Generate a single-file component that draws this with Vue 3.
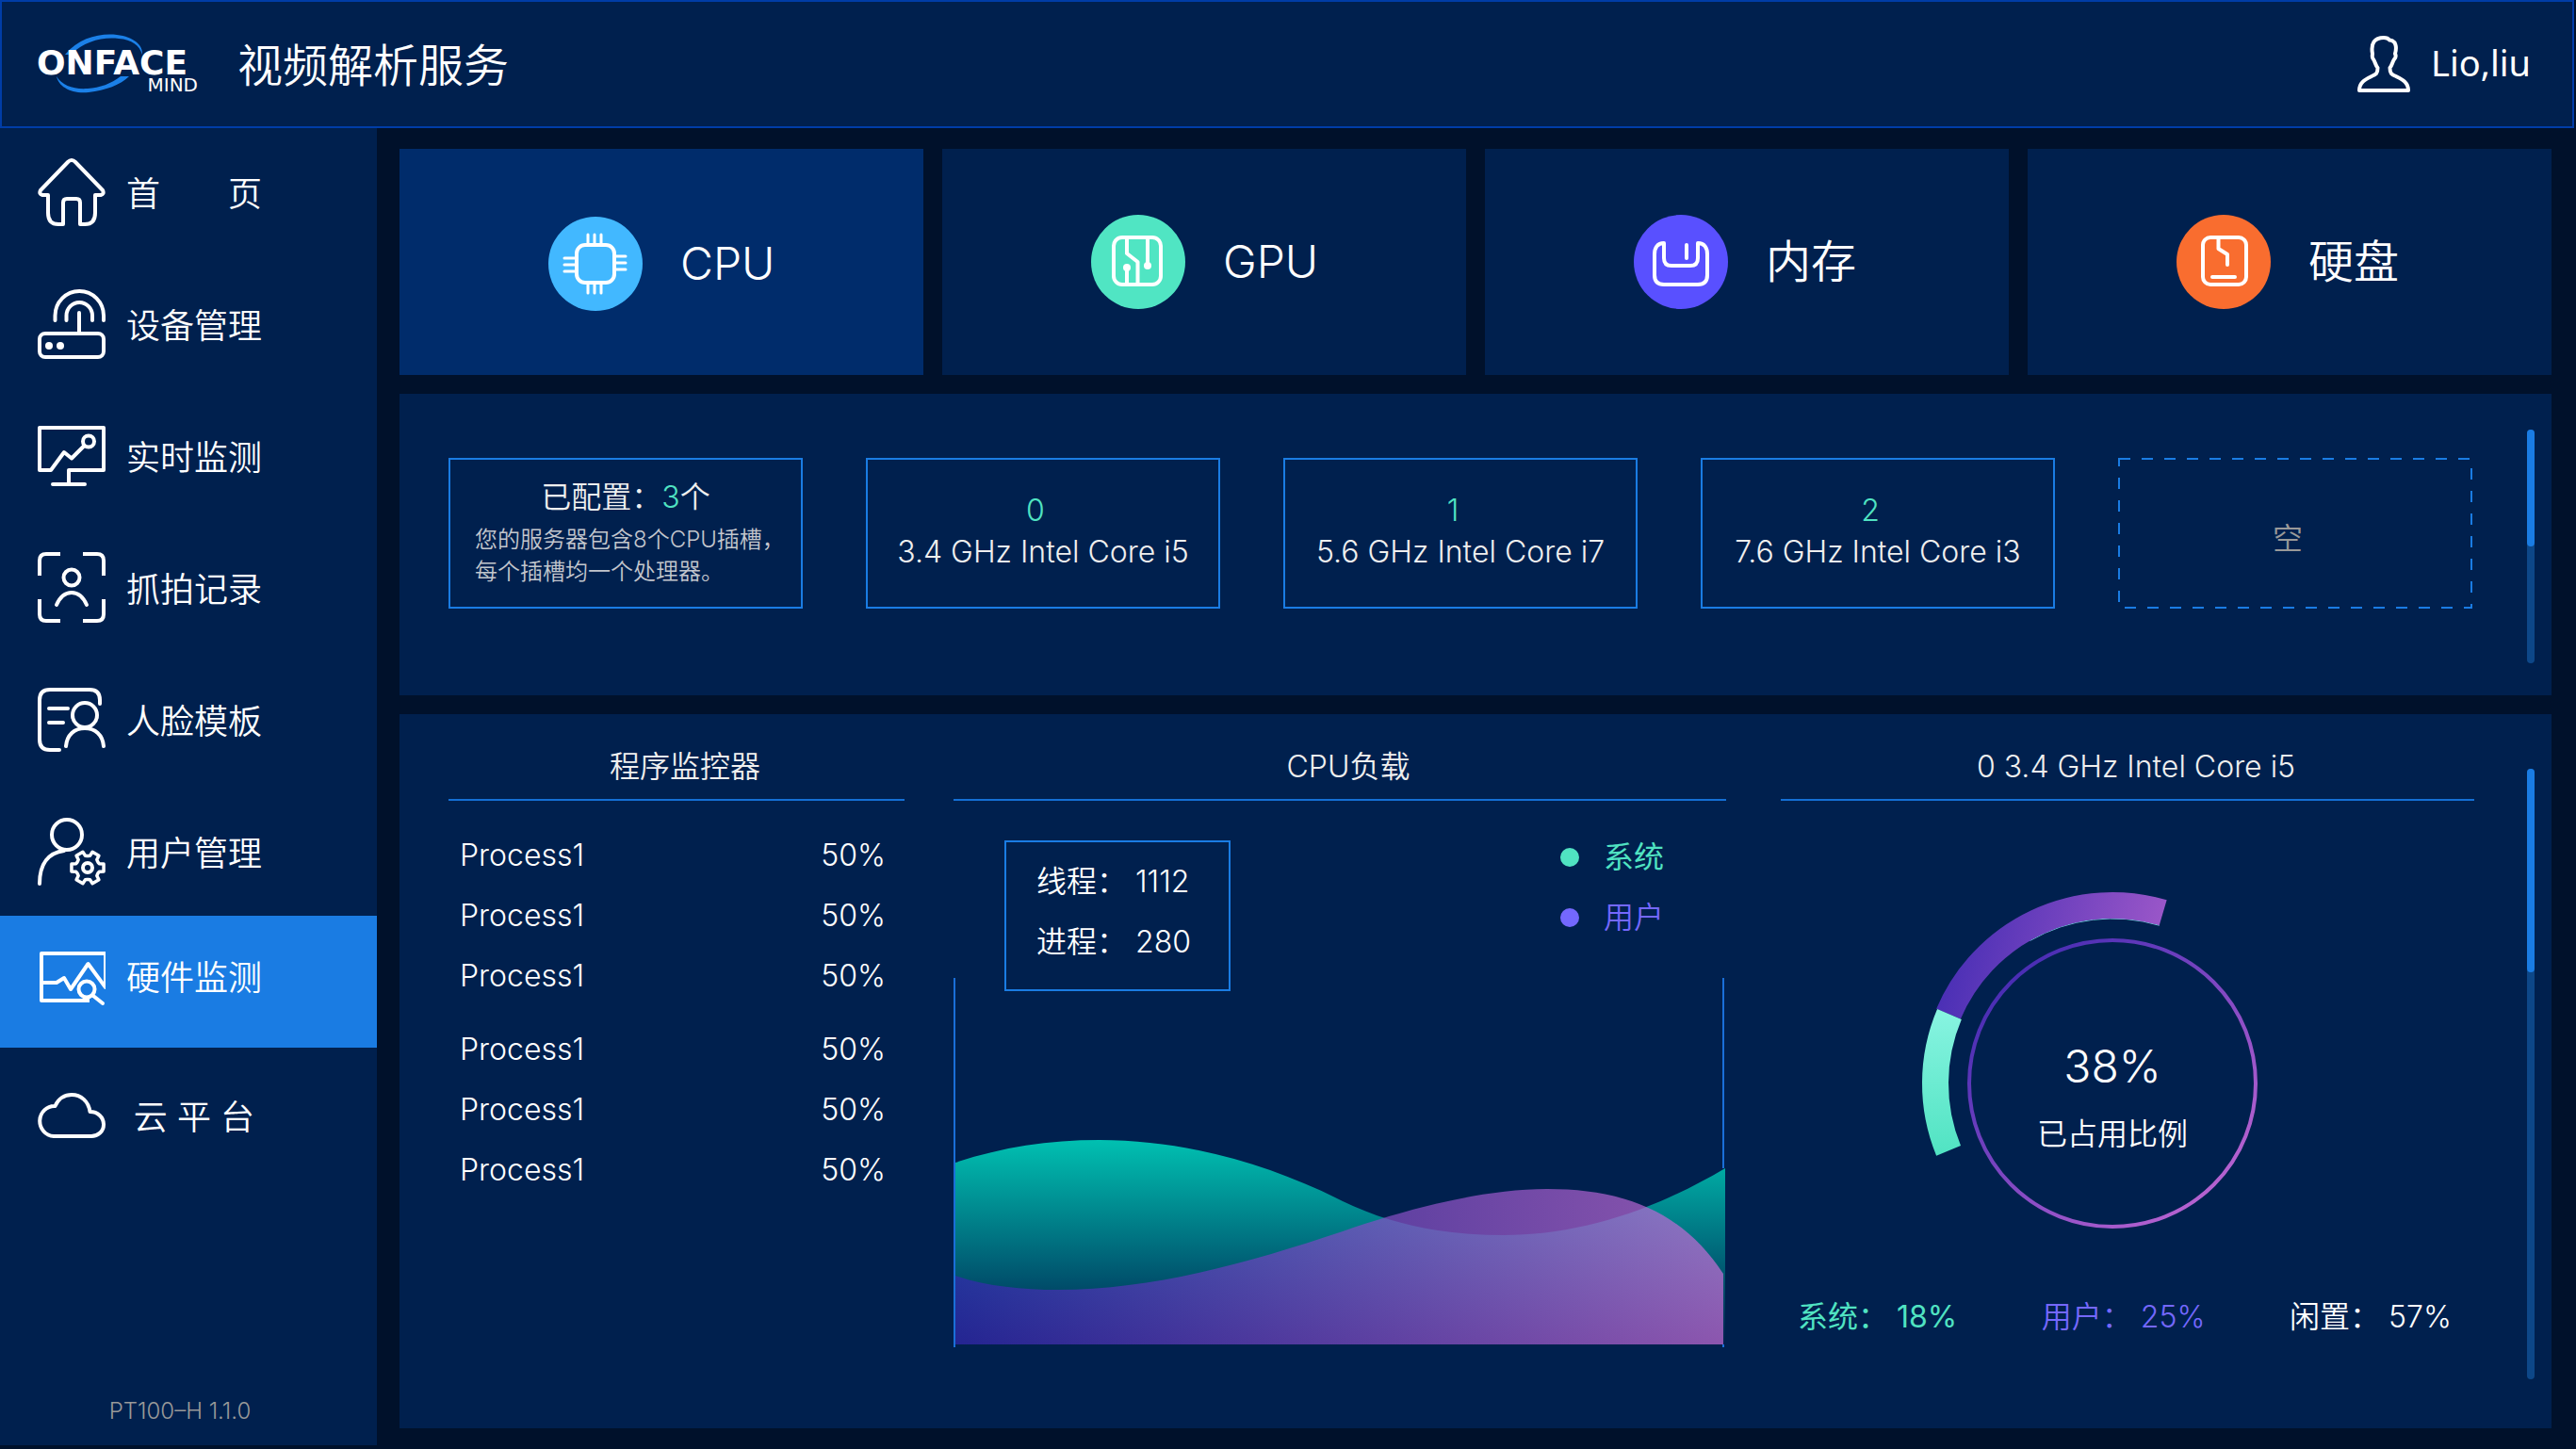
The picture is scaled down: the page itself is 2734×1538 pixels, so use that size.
<script setup>
import { ref } from 'vue'

const navItems = [
  { icon: 'home', label: '首 页', spread: true },
  { icon: 'device', label: '设备管理' },
  { icon: 'monitor', label: '实时监测' },
  { icon: 'capture', label: '抓拍记录' },
  { icon: 'template', label: '人脸模板' },
  { icon: 'user', label: '用户管理' },
  { icon: 'hardware', label: '硬件监测', active: true },
  { icon: 'cloud', label: '云 平 台', centered: true },
]

const tabs = [
  { id: 'cpu', label: 'CPU', color: '#42b8ff' },
  { id: 'gpu', label: 'GPU', color: '#50e5c3' },
  { id: 'memory', label: '内存', color: '#5950ff' },
  { id: 'disk', label: '硬盘', color: '#f96d2f' },
]
const activeTab = ref('cpu')

const slots = [
  { index: 0, name: '3.4 GHz Intel Core i5' },
  { index: 1, name: '5.6 GHz Intel Core i7' },
  { index: 2, name: '7.6 GHz Intel Core i3' },
]

const processGroups = [
  [
    { name: 'Process1', usage: '50%' },
    { name: 'Process1', usage: '50%' },
    { name: 'Process1', usage: '50%' },
  ],
  [
    { name: 'Process1', usage: '50%' },
    { name: 'Process1', usage: '50%' },
    { name: 'Process1', usage: '50%' },
  ],
]

// Point on a circle; the angle is measured clockwise from the top.
function polar(cx, cy, r, deg) {
  const a = ((deg - 90) * Math.PI) / 180
  return `${(cx + r * Math.cos(a)).toFixed(2)} ${(cy + r * Math.sin(a)).toFixed(2)}`
}
function arc(r, from, to) {
  return `M${polar(204, 204, r, from)} A${r} ${r} 0 0 1 ${polar(204, 204, r, to)}`
}
const arcs = {
  user: arc(189, -67, 16.5),
  system: arc(188, -112.3, -67),
  edge: arc(175, -30, 16.5),
}

const gear = (() => {
  const points = []
  for (let k = 0; k < 6; k++) {
    const mid = k * 60 + 30
    points.push(
      polar(53, 53, 12.5, mid - 27),
      polar(53, 53, 13, mid - 19),
      polar(53, 53, 17.5, mid - 13),
      polar(53, 53, 17.5, mid + 13),
      polar(53, 53, 13, mid + 19),
      polar(53, 53, 12.5, mid + 27),
    )
  }
  return `M${points.join('L')}Z`
})()
</script>

<template>
  <div class="app">
    <header class="topbar">
      <svg class="logo" viewBox="0 0 170 64" role="img" aria-label="ONFACE MIND">
        <path d="M29 22 C44 4 66 -1 84 1 C102 3 112 12 111 22 C108 12 100 6 86 5 C68 3 50 8 35 22 Z" fill="#1b80e8" />
        <path d="M20 45 C22 56 36 64 54 62 C72 60 88 54 97 45 L88 45 C78 53 66 57 53 58 C38 59 26 55 20 45 Z" fill="#1b80e8" />
        <text x="-1" y="43" class="logo-main">ONFACE</text>
        <text x="170" y="61" class="logo-sub" text-anchor="end">MIND</text>
      </svg>
      <h1>视频解析服务</h1>
      <a href="#" class="account">
        <svg class="line-icon" width="56" height="60" viewBox="0 0 56 60" aria-hidden="true">
          <path d="M2 58 C2 49 9 46 15 43 C20 41 21.500 40 21.500 34 C19 31 19 28 17 25 C15 23 16 21 16 19 C14 8 18 2 28 2 C31 2 33 3 34 4.500 C41 5 42 12 40 19 C41 21 41 23 39 25 C37 28 37 31 34.500 34 C34.500 40 36 41 41 43 C47 46 54 49 54 58 Z" />
        </svg>
        <span>Lio,liu</span>
      </a>
    </header>

    <div class="body">
      <aside class="sidebar">
        <nav>
          <a v-for="item in navItems" :key="item.icon" href="#" class="nav-item" :class="{ active: item.active }">
            <svg class="line-icon" width="72" height="76" viewBox="0 0 72 76" aria-hidden="true">
              <g v-if="item.icon === 'home'" transform="translate(0 2)">
                <path d="M27 70 H22 Q11 70 11 58 V39 H5 Q1 38 3 34 L32 4 Q36 0 40 4 L69 34 Q71 38 67 39 H61 V58 Q61 70 50 70 H45 V47 Q45 43 41 43 H31 Q27 43 27 47 Z" />
              </g>
              <g v-else-if="item.icon === 'device'" transform="translate(0 1)">
                <path d="M18.500 33 V28 A25.700 26 0 0 1 70 28 V33 M30.500 33 V28 A13.700 14 0 0 1 58 28 V33 M44 25 V46" />
                <rect x="2" y="47" width="68" height="25" rx="6" />
                <circle class="solid" cx="12" cy="60" r="4" />
                <circle class="solid" cx="24" cy="60" r="4" />
              </g>
              <g v-else-if="item.icon === 'monitor'" transform="translate(0 6)">
                <path d="M33 62 V47 H70 V2 H2 V47 H14 L28 28 L36 34.500 L49.500 21 M16 62 H50" />
                <circle cx="54" cy="16.500" r="6" />
              </g>
              <g v-else-if="item.icon === 'capture'">
                <path class="butt" d="M2 25 V9 Q2 2 9 2 H24 M48 2 H63 Q70 2 70 9 V25 M70 50 V66 Q70 73 63 73 H48 M24 73 H9 Q2 73 2 66 V50" />
                <circle cx="36" cy="27" r="8.500" />
                <path d="M20 56 C24 47 29 43 36 43 C43 43 48 47 52 56" />
              </g>
              <g v-else-if="item.icon === 'template'" transform="translate(0 4)">
                <path d="M23 66 H13 Q2 66 2 55 V13 Q2 2 13 2 H55 Q66 2 66 13 V17 M12 22 H32 M12 37 H27" />
                <circle cx="50" cy="29" r="13" />
                <path d="M30 62 C31 50 39 43 50 43 C61 43 69 50 70 62" />
              </g>
              <g v-else-if="item.icon === 'user'" transform="translate(0 2)">
                <circle cx="31" cy="18" r="16" />
                <path d="M28 35 C12 37 2 48 2 70" />
                <path :d="gear" stroke-width="3.500" />
                <circle cx="53" cy="53" r="5" />
              </g>
              <g v-else-if="item.icon === 'hardware'" transform="translate(2 10)">
                <path class="square" d="M51 52 H2 V2 H70 V38 L51.500 13 L33 40 L26 28 L18 33 H2" />
                <circle cx="50" cy="40" r="8.500" />
                <path d="M57 47 L67 55" />
              </g>
              <g v-else transform="translate(0 14)">
                <path d="M17 46 A15.500 16 0 0 1 18.500 14 C22 6 29 2 36 2 C46 2 54 9 55.500 20 C64 20 70 26 70 33.500 C70 41 64 46 57 46 Z" />
              </g>
            </svg>
            <span class="nav-label" :class="{ spread: item.spread, centered: item.centered }">{{ item.label }}</span>
          </a>
        </nav>
        <p class="version">PT100–H 1.1.0</p>
      </aside>

      <main>
        <div class="tabs" role="tablist">
          <button
            v-for="tab in tabs"
            :key="tab.id"
            type="button"
            role="tab"
            class="tab"
            :class="{ active: activeTab === tab.id }"
            :aria-selected="activeTab === tab.id"
            @click="activeTab = tab.id"
          >
            <svg class="line-icon" width="100" height="100" viewBox="0 0 100 100" aria-hidden="true">
              <circle class="disc" cx="50" cy="50" r="50" :fill="tab.color" />
              <g v-if="tab.id === 'cpu'">
                <rect x="30" y="30" width="40" height="40" rx="9" />
                <path stroke-width="3" d="M42 28 V19 M49 28 V19 M56 28 V19 M42 72 V81 M49 72 V81 M56 72 V81 M28 44 H17 M28 51 H17 M28 58 H17 M72 42 H82 M72 49 H82 M72 56 H82" />
              </g>
              <g v-else-if="tab.id === 'gpu'">
                <rect x="24" y="24" width="50" height="50" rx="9" />
                <path d="M38 25 V41 L49.500 50 V73 M38 58 V73 M60 25 V54" />
                <circle class="solid" cx="38" cy="56" r="4" />
                <circle class="solid" cx="60" cy="54" r="4" />
              </g>
              <g v-else-if="tab.id === 'memory'">
                <path d="M32 30 C25 30 22 35 22 42 V64 Q22 74 32 74 H68 Q78 74 78 64 V42 C78 35 75 30 68 30 V46 Q68 54 60 54 H40 Q32 54 32 46 Z M56 32 V46" />
              </g>
              <g v-else>
                <rect x="28" y="24" width="46" height="50" rx="8" />
                <path d="M44.500 25 V36 L54 42 V53 M38 66 H62" />
              </g>
            </svg>
            <span>{{ tab.label }}</span>
          </button>
        </div>

        <section class="panel slots-panel">
          <ul class="slots">
            <li class="slot summary">
              <h2>已配置：<em>3</em>个</h2>
              <p>您的服务器包含8个CPU插槽，<br />每个插槽均一个处理器。</p>
            </li>
            <li v-for="slot in slots" :key="slot.index" class="slot">
              <span class="slot-index">{{ slot.index }}</span>
              <span>{{ slot.name }}</span>
            </li>
            <li class="slot empty">
              <svg class="dashes" aria-hidden="true">
                <rect x="1" y="1" width="374" height="158" />
              </svg>
              <span>空</span>
            </li>
          </ul>
          <div class="scrollbar"><div class="thumb half"></div></div>
        </section>

        <section class="panel detail-panel">
          <div class="columns">
            <section>
              <h2 class="col-title">程序监控器</h2>
              <table class="processes">
                <tbody v-for="(group, g) in processGroups" :key="g">
                  <tr v-for="(row, r) in group" :key="r">
                    <td>{{ row.name }}</td>
                    <td class="usage">{{ row.usage }}</td>
                  </tr>
                </tbody>
              </table>
            </section>

            <section>
              <h2 class="col-title">CPU负载</h2>
              <div class="load-head">
                <div class="counts">
                  <p>线程： 1112</p>
                  <p>进程： 280</p>
                </div>
                <ul class="legend">
                  <li class="system">系统</li>
                  <li class="user">用户</li>
                </ul>
              </div>
              <svg class="chart" viewBox="0 0 820 392" preserveAspectRatio="none" role="img" aria-label="CPU负载">
                <defs>
                  <linearGradient id="waveSystem" gradientUnits="userSpaceOnUse" x1="0" y1="172" x2="0" y2="389">
                    <stop offset="0" stop-color="#00c0b1" />
                    <stop offset="1" stop-color="#00204e" />
                  </linearGradient>
                  <linearGradient id="waveUser" gradientUnits="userSpaceOnUse" x1="0" y1="389" x2="817" y2="350">
                    <stop offset="0" stop-color="#3326ae" />
                    <stop offset="1" stop-color="#c86dd7" />
                  </linearGradient>
                </defs>
                <path d="M2 196 C50 180 100 172 155 172 C250 172 340 200 413 237 C465 262 520 273 584 273 C660 273 740 249 819 202 V389 H2 Z" fill="url(#waveSystem)" />
                <path d="M2 316 C35 327 72 331 111 331 C215 331 320 300 413 269 C480 246 560 224 630 224 C715 224 775 250 817 314 V389 H2 Z" fill="url(#waveUser)" fill-opacity="0.7" />
                <path d="M1 0 V392 M817 0 V202" stroke="#1a6fd8" stroke-width="2" />
                <path d="M817 389 V392" stroke="#1a6fd8" stroke-width="2" />
              </svg>
            </section>

            <section class="core">
              <h2 class="col-title">0 3.4 GHz Intel Core i5</h2>
              <div class="gauge">
                <svg viewBox="0 0 408 408" aria-hidden="true">
                  <defs>
                    <linearGradient id="gaugeUser" gradientUnits="userSpaceOnUse" x1="30" y1="70" x2="250" y2="130">
                      <stop offset="0" stop-color="#4a2fb5" />
                      <stop offset="1" stop-color="#a15aca" />
                    </linearGradient>
                    <linearGradient id="gaugeSystem" gradientUnits="userSpaceOnUse" x1="0" y1="125" x2="0" y2="282">
                      <stop offset="0" stop-color="#88f4e1" />
                      <stop offset="1" stop-color="#50e3c2" />
                    </linearGradient>
                    <linearGradient id="gaugeRing" gradientUnits="userSpaceOnUse" x1="90" y1="80" x2="310" y2="320">
                      <stop offset="0" stop-color="#452bb3" />
                      <stop offset="1" stop-color="#b662d0" />
                    </linearGradient>
                  </defs>
                  <g fill="none">
                    <path :d="arcs.edge" stroke="#6fd8dc" stroke-width="1" />
                    <path :d="arcs.user" stroke="url(#gaugeUser)" stroke-width="28" />
                    <path :d="arcs.system" stroke="url(#gaugeSystem)" stroke-width="28" />
                    <circle cx="204" cy="204" r="152" stroke="url(#gaugeRing)" stroke-width="4" />
                  </g>
                </svg>
                <div class="gauge-text">
                  <strong>38%</strong>
                  <span>已占用比例</span>
                </div>
              </div>
              <ul class="shares">
                <li class="system">系统： 18%</li>
                <li class="user">用户： 25%</li>
                <li>闲置： 57%</li>
              </ul>
            </section>
          </div>
          <div class="scrollbar"><div class="thumb third"></div></div>
        </section>
      </main>
    </div>
  </div>
</template>

<style>
body {
  margin: 0;
  background: #00112b;
}
</style>

<style scoped>
* {
  box-sizing: border-box;
}
h1,
h2,
p,
ul {
  margin: 0;
  padding: 0;
  font-size: inherit;
  font-weight: inherit;
}
ul {
  list-style: none;
}
a {
  color: inherit;
  text-decoration: none;
}
.app {
  display: flex;
  flex-direction: column;
  min-height: 100vh;
  padding-bottom: 4px;
  color: #fff;
  font-family: Inter, 'Noto Sans CJK SC', sans-serif;
  font-size: 32px;
  font-weight: 350;
  line-height: 40px;
}
.line-icon {
  flex: none;
  fill: none;
  stroke: #fff;
  stroke-width: 4;
  stroke-linecap: round;
  stroke-linejoin: round;
}
.line-icon .solid {
  fill: #fff;
  stroke: none;
}
.line-icon .disc {
  stroke: none;
}
.line-icon .butt {
  stroke-linecap: butt;
}
.line-icon .square {
  stroke-linecap: square;
}

.topbar {
  display: flex;
  align-items: center;
  height: 136px;
  margin-right: 2px;
  padding: 0 44px 0 38px;
  background: #00204e;
  border: 2px solid #003da7;
}
.logo {
  flex: none;
  width: 170px;
  height: 64px;
  overflow: visible;
}
.logo text {
  font-family: 'DejaVu Sans', sans-serif;
  fill: #fff;
}
.logo .logo-main {
  font-size: 36px;
  font-weight: 700;
}
.logo .logo-sub {
  font-size: 20px;
  font-weight: 400;
}
h1 {
  margin-left: 42px;
  padding-top: 4px;
  font-size: 48px;
  line-height: 64px;
}
.account {
  display: flex;
  align-items: center;
  gap: 22px;
  margin-left: auto;
  font-family: 'Noto Sans', sans-serif;
  font-size: 38px;
  font-weight: 400;
}
.account span {
  padding-bottom: 4px;
}

.body {
  display: flex;
  flex: 1;
}
.sidebar {
  display: flex;
  flex: none;
  flex-direction: column;
  width: 400px;
  background: #00204e;
}
nav {
  margin-top: -4px;
}
.nav-item {
  display: flex;
  align-items: center;
  gap: 22px;
  height: 140px;
  padding: 4px 0 0 40px;
  font-size: 36px;
}
.nav-label {
  width: 144px;
  padding-top: 4px;
  white-space: nowrap;
}
.nav-label.spread {
  text-align-last: justify;
}
.nav-label.centered {
  text-align: center;
}
.nav-item.active {
  padding: 0 0 8px 40px;
  background: #1a7ce3;
}
.nav-item.active .nav-label {
  padding-top: 0;
}
.version {
  margin-top: auto;
  padding: 0 18px 16px 0;
  color: #999;
  font-size: 24px;
  text-align: center;
}

main {
  display: flex;
  flex: 1;
  flex-direction: column;
  gap: 20px;
  min-width: 0;
  padding: 22px 26px 18px 24px;
}
.tabs {
  display: grid;
  grid-template-columns: repeat(4, 1fr);
  gap: 20px;
}
.tab {
  display: flex;
  align-items: center;
  gap: 40px;
  height: 240px;
  padding: 0 0 0 158px;
  background: #00204e;
  border: 0;
  color: inherit;
  font: inherit;
  font-size: 48px;
  cursor: pointer;
}
.tab.active {
  padding-top: 4px;
  background: #002c6b;
}

.panel {
  display: flex;
  justify-content: space-between;
  background: #00204e;
}
.scrollbar {
  flex: none;
  width: 8px;
  background: #0d4788;
  border-radius: 4px;
}
.thumb {
  width: 8px;
  background: #1a7ce3;
  border-radius: 4px;
}
.thumb.half {
  height: 50%;
}
.thumb.third {
  height: 33.333%;
}

.slots-panel {
  height: 320px;
  padding: 38px 18px 34px 52px;
}
.slots {
  display: flex;
  flex: 1;
  justify-content: space-between;
  margin-right: 58px;
  padding-top: 30px;
}
.slot {
  display: flex;
  flex-direction: column;
  align-items: center;
  width: 376px;
  height: 160px;
  padding-top: 34px;
  gap: 4px;
  border: 2px solid #1a7ce3;
  color: #efefef;
  white-space: nowrap;
}
.slot-index {
  padding-right: 16px;
  color: #50e3c2;
}
.slot.summary {
  padding-top: 20px;
  gap: 8px;
}
.slot em {
  color: #50e3c2;
  font-style: normal;
}
.slot.summary p {
  width: 320px;
  color: #c3c6cd;
  font-size: 24px;
  line-height: 34px;
}
.slot.empty {
  position: relative;
  justify-content: center;
  padding: 12px 16px 0 0;
  border: 0;
  color: #999;
}
.dashes {
  position: absolute;
  inset: 0;
  width: 376px;
  height: 160px;
}
.dashes rect {
  fill: none;
  stroke: #1a7ce3;
  stroke-width: 2;
  stroke-dasharray: 12;
}

.detail-panel {
  flex: 1;
  padding: 32px 18px 52px 52px;
}
.detail-panel .scrollbar {
  margin-top: 26px;
}
.columns {
  display: grid;
  flex: 1;
  grid-template-columns: 484fr 820fr 742fr;
  gap: 52px;
  margin-right: 56px;
}
.core {
  padding-left: 6px;
}
.col-title {
  height: 60px;
  padding: 4px 0 0 18px;
  border-bottom: 2px solid #146fd4;
  color: #efefef;
  text-align: center;
}
.processes {
  width: 100%;
  margin-top: 26px;
  border-collapse: collapse;
}
.processes td {
  height: 64px;
  padding: 0 0 0 12px;
}
.processes .usage {
  padding: 0 20px 0 0;
  text-align: right;
}
.processes tbody + tbody tr:first-child td {
  height: 78px;
  padding-top: 14px;
}
.load-head {
  display: flex;
  justify-content: space-between;
  height: 188px;
  padding: 42px 66px 0 54px;
}
.counts {
  z-index: 1;
  width: 240px;
  height: 160px;
  padding: 22px 0 0 32px;
  border: 2px solid #1a7ce3;
}
.counts p {
  margin-bottom: 24px;
}
.legend {
  margin-top: -2px;
}
.legend li {
  display: flex;
  align-items: center;
  gap: 26px;
  margin-bottom: 24px;
}
.legend li::before {
  width: 20px;
  height: 20px;
  background: currentColor;
  border-radius: 50%;
  content: '';
}
.system {
  color: #50e3c2;
  font-weight: 400;
}
.user {
  color: #7468ff;
}
.chart {
  display: block;
  width: 100%;
  height: 392px;
}
.gauge {
  position: relative;
  width: 408px;
  height: 408px;
  margin: 96px 0 0 148px;
}
.gauge-text {
  position: absolute;
  inset: 0;
  display: flex;
  flex-direction: column;
  align-items: center;
  justify-content: center;
  gap: 32px;
  padding-top: 36px;
}
.gauge-text strong {
  font-size: 48px;
  font-weight: inherit;
}
.shares {
  display: flex;
  justify-content: space-between;
  margin-top: 24px;
  padding: 0 24px 0 18px;
}
</style>
